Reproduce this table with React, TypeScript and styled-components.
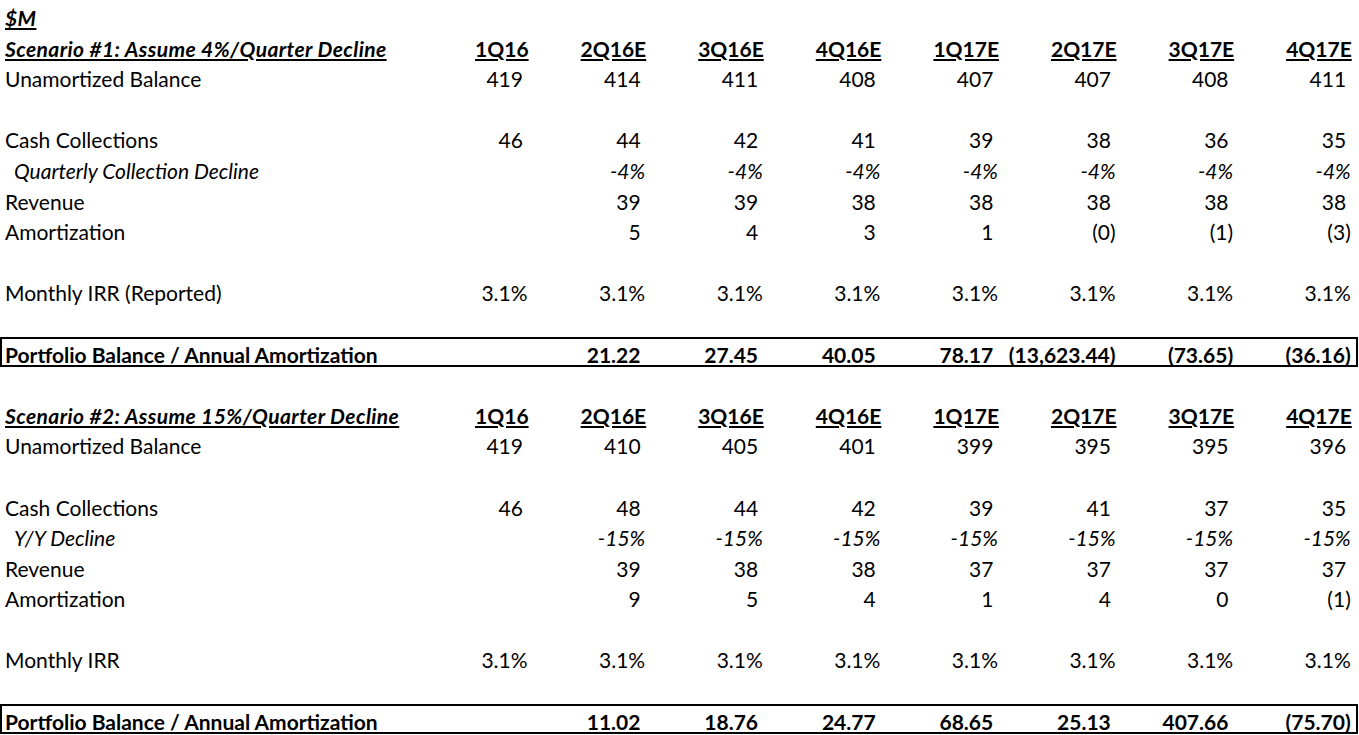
import styled, { createGlobalStyle } from "styled-components";

const GlobalStyle = createGlobalStyle`
  html, body {
    margin: 0;
    padding: 0;
    background: #ffffff;
  }
  body {
    font-family: Lato, "Liberation Sans", sans-serif;
    color: #000000;
  }
`;

type Line =
  | { kind: "title"; label: string }
  | { kind: "head"; label: string; values: string[] }
  | { kind: "data"; label: string; values: string[]; sub?: boolean }
  | { kind: "ratio"; label: string; values: string[] }
  | { kind: "blank" };

const quarters = ["1Q16", "2Q16E", "3Q16E", "4Q16E", "1Q17E", "2Q17E", "3Q17E", "4Q17E"];

const lines: Line[] = [
  { kind: "title", label: "$M" },
  { kind: "head", label: "Scenario #1: Assume 4%/Quarter Decline", values: quarters },
  { kind: "data", label: "Unamortized Balance", values: ["419", "414", "411", "408", "407", "407", "408", "411"] },
  { kind: "blank" },
  { kind: "data", label: "Cash Collections", values: ["46", "44", "42", "41", "39", "38", "36", "35"] },
  { kind: "data", label: "Quarterly Collection Decline", sub: true, values: ["", "-4%", "-4%", "-4%", "-4%", "-4%", "-4%", "-4%"] },
  { kind: "data", label: "Revenue", values: ["", "39", "39", "38", "38", "38", "38", "38"] },
  { kind: "data", label: "Amortization", values: ["", "5", "4", "3", "1", "(0)", "(1)", "(3)"] },
  { kind: "blank" },
  { kind: "data", label: "Monthly IRR (Reported)", values: ["3.1%", "3.1%", "3.1%", "3.1%", "3.1%", "3.1%", "3.1%", "3.1%"] },
  { kind: "blank" },
  { kind: "ratio", label: "Portfolio Balance / Annual Amortization", values: ["", "21.22", "27.45", "40.05", "78.17", "(13,623.44)", "(73.65)", "(36.16)"] },
  { kind: "blank" },
  { kind: "head", label: "Scenario #2: Assume 15%/Quarter Decline", values: quarters },
  { kind: "data", label: "Unamortized Balance", values: ["419", "410", "405", "401", "399", "395", "395", "396"] },
  { kind: "blank" },
  { kind: "data", label: "Cash Collections", values: ["46", "48", "44", "42", "39", "41", "37", "35"] },
  { kind: "data", label: "Y/Y Decline", sub: true, values: ["", "-15%", "-15%", "-15%", "-15%", "-15%", "-15%", "-15%"] },
  { kind: "data", label: "Revenue", values: ["", "39", "38", "38", "37", "37", "37", "37"] },
  { kind: "data", label: "Amortization", values: ["", "9", "5", "4", "1", "4", "0", "(1)"] },
  { kind: "blank" },
  { kind: "data", label: "Monthly IRR", values: ["3.1%", "3.1%", "3.1%", "3.1%", "3.1%", "3.1%", "3.1%", "3.1%"] },
  { kind: "blank" },
  { kind: "ratio", label: "Portfolio Balance / Annual Amortization", values: ["", "11.02", "18.76", "24.77", "68.65", "25.13", "407.66", "(75.70)"] },
];

export default function App() {
  return (
    <>
      <GlobalStyle />
      <Sheet>
        {lines.map((line, i) => {
          if (line.kind === "blank") return <Row key={i} />;
          if (line.kind === "title")
            return (
              <Row key={i}>
                <Heading>{line.label}</Heading>
              </Row>
            );
          if (line.kind === "head")
            return (
              <Row key={i}>
                <Heading>{line.label}</Heading>
                {line.values.map((q) => (
                  <QuarterCell key={q}>{q}</QuarterCell>
                ))}
              </Row>
            );
          return (
            <Row key={i} $boxed={line.kind === "ratio"}>
              <Label $sub={line.kind === "data" && line.sub}>{line.label}</Label>
              {line.values.map((v, j) => (
                <ValueCell key={j} $italic={line.kind === "data" && line.sub}>
                  <NumberText value={v} />
                </ValueCell>
              ))}
            </Row>
          );
        })}
      </Sheet>
    </>
  );
}

// Excel-style "#,##0_);(#,##0)": positives keep room for a closing paren
function NumberText({ value }: { value: string }) {
  if (!value) return null;
  if (value.endsWith("%") || value.startsWith("(")) return <>{value}</>;
  return (
    <>
      {value}
      <Pad>)</Pad>
    </>
  );
}

const Sheet = styled.div`
  width: 1359px;
  height: 735px;
  overflow: hidden;
  font-size: 21px;
`;

const Row = styled.div<{ $boxed?: boolean }>`
  display: grid;
  grid-template-columns: 412px repeat(8, 117.6px);
  width: 1358px;
  height: 30.6px;
  line-height: 35px;
  font-weight: ${(p) => (p.$boxed ? 700 : 400)};
  box-shadow: ${(p) => (p.$boxed ? "inset 0 0 0 2px #000" : "none")};
  white-space: nowrap;
`;

const Label = styled.div<{ $sub?: boolean }>`
  height: 30.6px;
  padding-left: ${(p) => (p.$sub ? "14px" : "5px")};
  font-style: ${(p) => (p.$sub ? "italic" : "normal")};
`;

const Heading = styled.div`
  height: 30.6px;
  padding-left: 5px;
  font-weight: 700;
  font-style: italic;
  letter-spacing: 0.4px;
  text-decoration: underline;
  text-underline-offset: 2px;
`;

const QuarterCell = styled.div`
  height: 30.6px;
  text-align: right;
  padding-right: 1px;
  font-weight: 700;
  text-decoration: underline;
  text-underline-offset: 2px;
`;

const ValueCell = styled.div<{ $italic?: boolean }>`
  height: 30.6px;
  text-align: right;
  padding-right: 2px;
  font-style: ${(p) => (p.$italic ? "italic" : "normal")};
`;

const Pad = styled.span`
  visibility: hidden;
  margin-right: -1px;
`;
